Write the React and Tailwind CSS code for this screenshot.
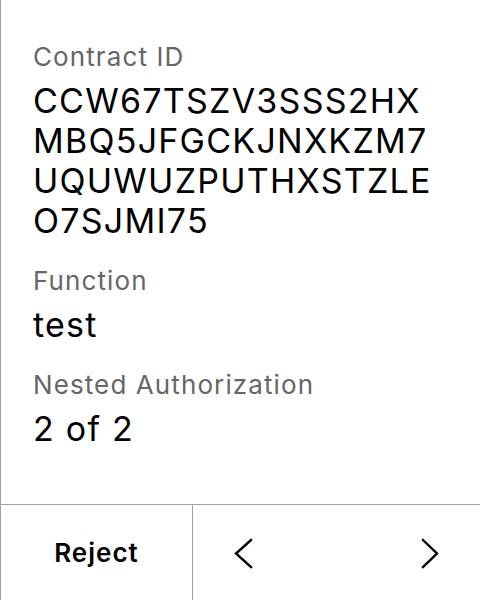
export default function App() {
  return (
    <div
      className="h-[600px] w-[480px] flex flex-col bg-white border-l border-[#a3a3a3] text-black"
      style={{ fontFamily: "Inter, 'Noto Sans', sans-serif" }}
    >
      <div className="flex-1 flex flex-col gap-6 pt-[41px] px-8">
        <div className="flex flex-col gap-2">
          <div className="text-[26px] leading-8 tracking-[1.1px] text-[#666666]">Contract ID</div>
          <div className="text-[34px] leading-10 tracking-[1.25px] break-all">
            CCW67TSZV3SSS2HX<br />MBQ5JFGCKJNXKZM7<br />UQUWUZPUTHXSTZLE<br />O7SJMI75
          </div>
        </div>
        <div className="flex flex-col gap-2">
          <div className="text-[26px] leading-8 tracking-[1.1px] text-[#666666]">Function</div>
          <div className="text-[34px] leading-10 tracking-[1.25px]">test</div>
        </div>
        <div className="flex flex-col gap-2">
          <div className="text-[26px] leading-8 tracking-[1.1px] text-[#666666]">Nested Authorization</div>
          <div className="text-[34px] leading-10 tracking-[1.25px]">2 of 2</div>
        </div>
      </div>
      <div className="h-[96px] flex border-t border-[#a3a3a3]">
        <button className="w-[192px] h-full border-r border-[#a3a3a3] flex items-center justify-center text-[26px] font-semibold tracking-[1px]">
          Reject
        </button>
        <div className="flex-1 flex items-center justify-between px-10">
          <svg width="20" height="32" viewBox="0 0 20 32" fill="none" stroke="black" strokeWidth="2.4" strokeLinecap="square">
            <path d="M18 3 L3 16.5 L18 30" />
          </svg>
          <svg width="20" height="32" viewBox="0 0 20 32" fill="none" stroke="black" strokeWidth="2.4" strokeLinecap="square">
            <path d="M3 3 L17 16.5 L3 30" />
          </svg>
        </div>
      </div>
    </div>
  );
}
